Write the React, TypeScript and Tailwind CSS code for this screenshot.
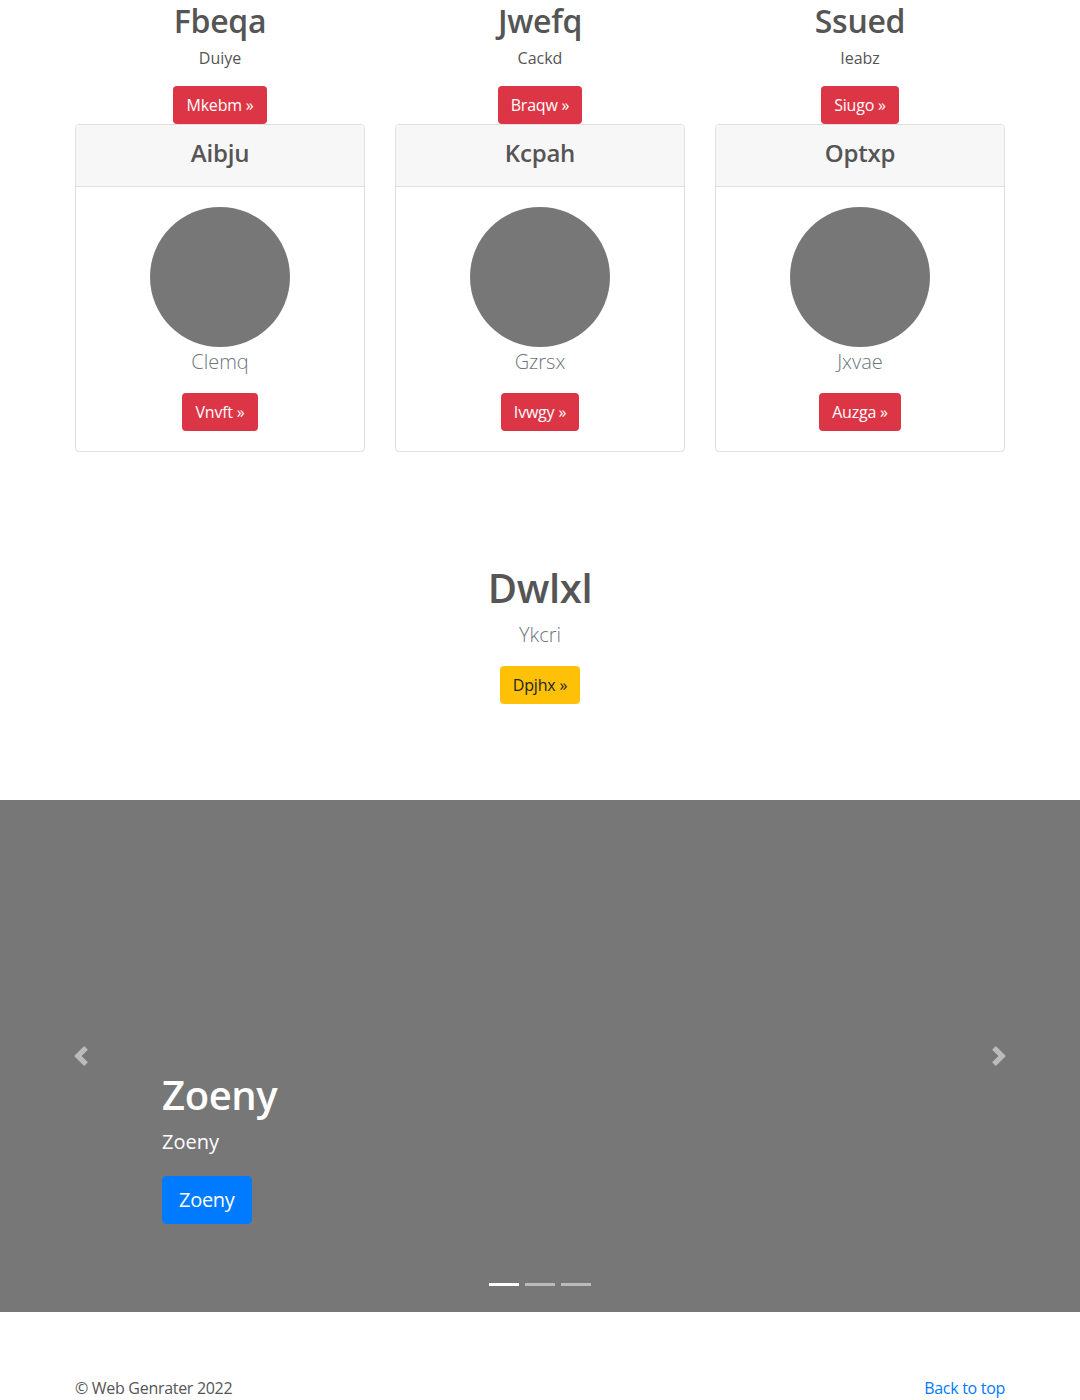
import React from 'react';

const features = [
  { title: 'Fbeqa', text: 'Duiye', btn: 'Mkebm' },
  { title: 'Jwefq', text: 'Cackd', btn: 'Braqw' },
  { title: 'Ssued', text: 'Ieabz', btn: 'Siugo' },
];

const cards = [
  { title: 'Aibju', text: 'Clemq', btn: 'Vnvft' },
  { title: 'Kcpah', text: 'Gzrsx', btn: 'Ivwgy' },
  { title: 'Optxp', text: 'Jxvae', btn: 'Auzga' },
];

const RedButton: React.FC<{ label: string }> = ({ label }) => (
  <a className="inline-block rounded border border-transparent bg-[#dc3545] px-3 py-[6px] text-base leading-6 tracking-[-0.2px] text-white">
    {label} &raquo;
  </a>
);

const App: React.FC = () => {
  return (
    <div className="min-h-screen bg-white text-[#555] font-['Open_Sans','Noto_Sans',sans-serif]">
      {/* feature columns */}
      <div className="mx-auto w-[930px] pt-[2px]">
        <div className="grid grid-cols-3 gap-x-[30px]">
          {features.map((f) => (
            <div key={f.title} className="flex flex-col items-center text-center">
              <h2 className="mb-[6px] text-[32px] font-semibold leading-[1.2] tracking-[-0.3px]">{f.title}</h2>
              <p className="mb-4 text-base leading-6">{f.text}</p>
              <RedButton label={f.btn} />
            </div>
          ))}
        </div>

        <div className="grid grid-cols-3 gap-x-[30px]">
          {cards.map((c) => (
            <div key={c.title} className="overflow-hidden rounded border border-[#dfdfdf] bg-white">
              <div className="border-b border-[#dfdfdf] bg-[#f7f7f7] px-5 pb-3 pt-[14px] text-center">
                <h4 className="mb-[6px] text-2xl font-semibold leading-[1.2] tracking-[-0.2px]">{c.title}</h4>
              </div>
              <div className="flex flex-col items-center p-5 text-center">
                <div className="h-[140px] w-[140px] rounded-full bg-[#777]" />
                <p className="mb-4 text-xl font-light leading-[30px] text-[#6c757d]">{c.text}</p>
                <RedButton label={c.btn} />
              </div>
            </div>
          ))}
        </div>
      </div>

      {/* center block */}
      <div className="mt-[112px] mb-[96px] flex flex-col items-center text-center">
        <h1 className="mb-2 text-[40px] font-semibold leading-[48px] tracking-[-0.4px]">Dwlxl</h1>
        <p className="mb-4 text-xl font-light leading-[30px] text-[#6c757d]">Ykcri</p>
        <a className="inline-block rounded border border-transparent bg-[#ffc107] px-3 py-[6px] text-base leading-6 tracking-[-0.2px] text-[#212529]">
          Dpjhx &raquo;
        </a>
      </div>

      {/* carousel */}
      <div className="relative h-[512px] bg-[#777]">
        <div className="absolute bottom-[88px] left-[15%] right-[15%] text-left text-white">
          <h1 className="mb-2 text-[40px] font-semibold leading-[48px] tracking-[-0.4px]">Zoeny</h1>
          <p className="mb-[19px] text-xl leading-[30px]">Zoeny</p>
          <a className="inline-block rounded-[0.3rem] border border-transparent bg-[#007bff] px-4 py-2 text-xl leading-[30px] tracking-[-0.3px] text-white">
            Zoeny
          </a>
        </div>

        <div className="absolute bottom-0 left-0 top-0 flex w-[15%] items-center justify-center opacity-50">
          <svg width="20" height="20" viewBox="0 0 8 8" fill="#fff">
            <path d="M5.25 0l-4 4 4 4 1.5-1.5L4.25 4l2.5-2.5L5.25 0z" />
          </svg>
        </div>
        <div className="absolute bottom-0 right-0 top-0 flex w-[15%] items-center justify-center opacity-50">
          <svg width="20" height="20" viewBox="0 0 8 8" fill="#fff">
            <path d="M2.75 0l-1.5 1.5L3.75 4l-2.5 2.5L2.75 8l4-4-4-4z" />
          </svg>
        </div>

        <div className="absolute bottom-[26px] left-0 right-0 flex justify-center gap-[6px]">
          <span className="h-[3px] w-[30px] bg-white" />
          <span className="h-[3px] w-[30px] bg-white opacity-50" />
          <span className="h-[3px] w-[30px] bg-white opacity-50" />
        </div>
      </div>

      {/* footer */}
      <footer className="mx-auto mt-16 flex w-[930px] justify-between pb-10 text-base leading-6 tracking-[-0.3px]">
        <p>&copy; Web Genrater 2022</p>
        <a className="text-[#007bff]">Back to top</a>
      </footer>
    </div>
  );
};

export default App;
